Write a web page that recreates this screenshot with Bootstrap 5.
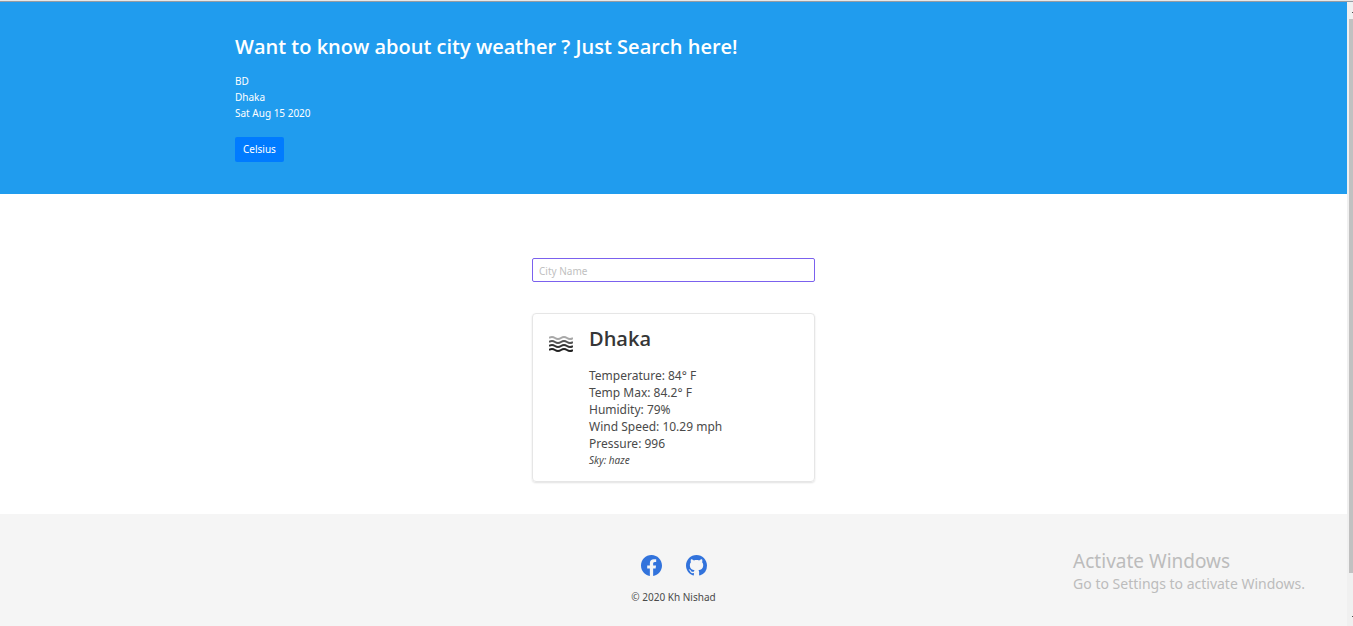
<!DOCTYPE html>
<html lang="en">
<head>
<meta charset="utf-8">
<meta name="viewport" content="width=device-width, initial-scale=1">
<title>City Weather</title>
<link href="https://cdn.jsdelivr.net/npm/bootstrap@5.3.0/dist/css/bootstrap.min.css" rel="stylesheet">
<style>
body { font-family: "Noto Sans", "Open Sans", sans-serif; font-size: 10px; line-height: 16px; color: #4a4a4a; background: #fff; }
h1, h2 { font-family: "Open Sans", "Noto Sans", sans-serif; }
.window-edge { height: 2px; background: #e6e6e6; border-bottom: 1px solid #959ba3; }
.hero { background: #209cee; color: #fff; padding: 32px 0; }
.hero-inner { max-width: 877px; }
.hero h1 { font-size: 20px; line-height: 26px; font-weight: 600; margin-bottom: 13px; }
.btn-unit { background: #007bff; color: #fff; font-size: 10px; line-height: 17px; padding: 4px 8px; border: 0; border-radius: 2px; }
.btn-unit:hover { background: #0069d9; color: #fff; }
.weather { width: 283px; max-width: 100%; padding: 64px 0 32px; gap: 31px; }
.city-input { font-size: 10px; line-height: 16px; height: 24px; min-height: 0; padding: 4px 6px 2px; border: 1px solid #7b61ee; border-radius: 2px; }
.city-input:focus { border-color: #7b61ee; box-shadow: none; }
.city-input::placeholder { color: #bfbfbf; }
.weather-card { border: 1px solid #e6e6e6; border-radius: 4px; padding: 13px 16px; gap: 16px; box-shadow: 0 1px 2px rgba(10,10,10,.12); }
.weather-card h2 { font-size: 20px; line-height: 24px; font-weight: 600; color: #363636; margin-bottom: 16px; }
.readings { font-size: 12px; line-height: 17px; }
.page-foot { background: #f5f5f5; padding: 41px 0 21px; }
.page-foot a { color: #3273dc; }
.social { margin-bottom: 13px; }
.watermark { right: 48px; bottom: 32px; color: #bcbcbc; font-size: 14px; line-height: 20px; pointer-events: none; }
.watermark-title { font-size: 19px; line-height: 26px; }
.scroll-track { width: 6px; background: #f0f0f0; padding: 17px 0 53px 2px; }
.scroll-thumb { background: #c1c1c1; }
.arrow { right: 0; width: 1px; height: 1px; background: #505050; }
.arrow-up { top: 12px; }
.arrow-down { bottom: 9px; }
</style>
</head>
<body>
<div class="min-vh-100 d-flex flex-column position-relative">
  <div class="window-edge"></div>
  <div class="d-flex flex-grow-1">
    <div class="flex-grow-1 d-flex flex-column">
      <header class="hero">
        <div class="hero-inner mx-auto">
          <h1>Want to know about city weather ? Just Search here!</h1>
          <div>BD</div>
          <div>Dhaka</div>
          <div class="mb-3">Sat Aug 15 2020</div>
          <button type="button" class="btn btn-unit d-block">Celsius</button>
        </div>
      </header>
      <main class="weather mx-auto d-flex flex-column">
        <input type="text" class="form-control city-input" placeholder="City Name" aria-label="City Name">
        <section class="weather-card d-flex">
          <svg class="mt-1 flex-shrink-0" width="24" height="25" viewBox="0 0 24 25" fill="none" stroke-width="2" aria-hidden="true">
            <path stroke="#a8a8a8" d="M0 7q3-2 6 0t6 0t6 0t6 0"/>
            <path stroke="#555" d="M0 11q3-2 6 0t6 0t6 0t6 0"/>
            <path stroke="#333" d="M0 15q3-2 6 0t6 0t6 0t6 0"/>
            <path stroke="#222" d="M0 19q3-2 6 0t6 0t6 0t6 0"/>
          </svg>
          <div>
            <h2>Dhaka</h2>
            <div class="readings">
              <div>Temperature: 84° F</div>
              <div>Temp Max: 84.2° F</div>
              <div>Humidity: 79%</div>
              <div>Wind Speed: 10.29 mph</div>
              <div>Pressure: 996</div>
            </div>
            <em class="d-block">Sky: haze</em>
          </div>
        </section>
      </main>
      <footer class="page-foot flex-grow-1 text-center">
        <div class="social d-flex justify-content-center gap-4">
          <a href="#" class="d-flex" aria-label="Facebook"><svg width="21" height="21" viewBox="0 0 16 16" fill="currentColor"><path d="M16 8.049c0-4.446-3.582-8.05-8-8.05C3.58 0-.002 3.603-.002 8.05c0 4.017 2.926 7.347 6.75 7.951v-5.625h-2.03V8.05H6.75V6.275c0-2.017 1.195-3.131 3.022-3.131.876 0 1.791.157 1.791.157v1.98h-1.009c-.993 0-1.303.621-1.303 1.258v1.51h2.218l-.354 2.326H9.25V16c3.824-.604 6.75-3.934 6.75-7.951z"/></svg></a>
          <a href="#" class="d-flex" aria-label="GitHub"><svg width="21" height="21" viewBox="0 0 16 16" fill="currentColor"><path d="M8 0C3.58 0 0 3.58 0 8c0 3.54 2.29 6.53 5.47 7.59.4.07.55-.17.55-.38 0-.19-.01-.82-.01-1.49-2.01.37-2.53-.49-2.69-.94-.09-.23-.48-.94-.82-1.13-.28-.15-.68-.52-.01-.53.63-.01 1.08.58 1.23.82.72 1.21 1.87.87 2.33.66.07-.52.28-.87.51-1.07-1.78-.2-3.64-.89-3.64-3.95 0-.87.31-1.59.82-2.15-.08-.2-.36-1.02.08-2.12 0 0 .67-.21 2.2.82.64-.18 1.32-.27 2-.27s1.36.09 2 .27c1.53-1.04 2.2-.82 2.2-.82.44 1.1.16 1.92.08 2.12.51.56.82 1.27.82 2.15 0 3.07-1.87 3.75-3.65 3.95.29.25.54.73.54 1.48 0 1.07-.01 1.93-.01 2.2 0 .21.15.46.55.38A8.01 8.01 0 0 0 16 8c0-4.42-3.58-8-8-8z"/></svg></a>
        </div>
        <div>© 2020 Kh Nishad</div>
      </footer>
    </div>
    <div class="scroll-track d-flex" aria-hidden="true"><div class="scroll-thumb flex-grow-1"></div></div>
  </div>
  <div class="arrow arrow-up position-absolute"></div>
  <div class="arrow arrow-down position-absolute"></div>
  <div class="watermark position-absolute">
    <div class="watermark-title">Activate Windows</div>
    <div>Go to Settings to activate Windows.</div>
  </div>
</div>
<script src="https://cdn.jsdelivr.net/npm/bootstrap@5.3.0/dist/js/bootstrap.bundle.min.js"></script>
</body>
</html>
